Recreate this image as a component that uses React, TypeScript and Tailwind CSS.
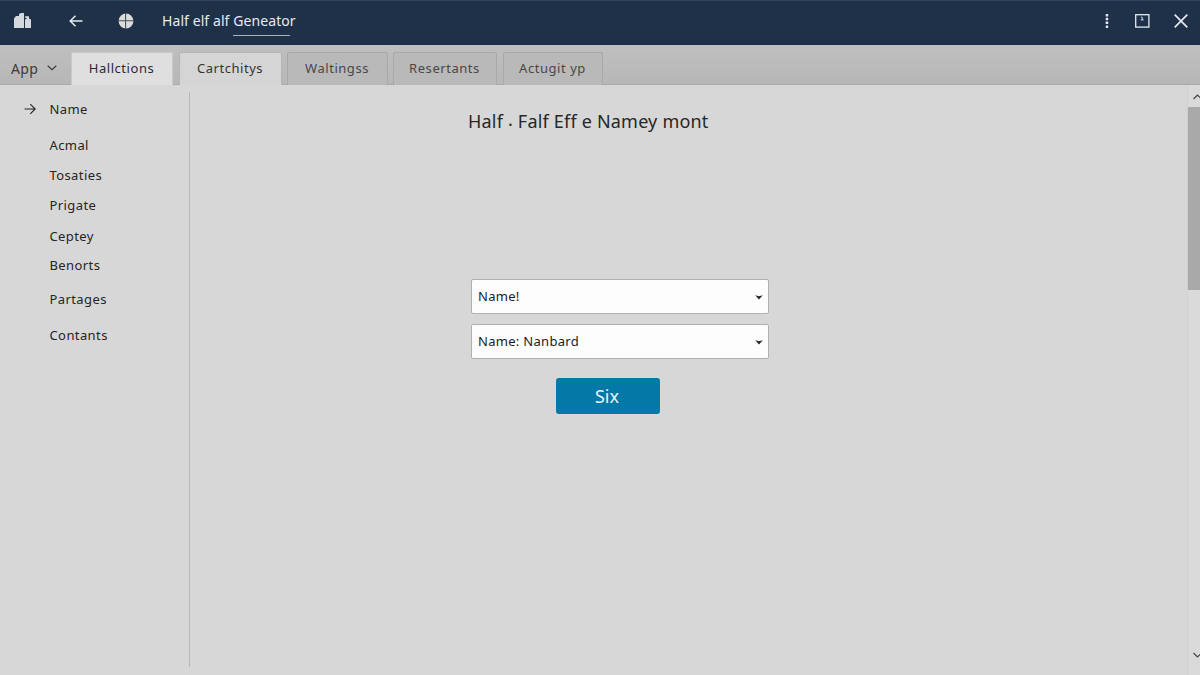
interface Tab {
  label: string;
  className: string;
}

interface NavItem {
  label: string;
  className: string;
}

const tabs: Tab[] = [
  { label: "Hallctions", className: "w-[102px] border-[#c9c9c9] bg-[#dfdfdf] text-[#2c2c2c]" },
  { label: "Cartchitys", className: "ml-[6px] w-[103px] border-[#b4b4b4] bg-[#d5d5d5] text-[#333333]" },
  { label: "Waltingss", className: "ml-[5px] w-[101px] border-[#a9a9a9] bg-[#b9b9b9] text-[#484848]" },
  { label: "Resertants", className: "ml-[5px] w-[104px] border-[#a9a9a9] bg-[#b9b9b9] text-[#484848]" },
  { label: "Actugit yp", className: "ml-[6px] w-[100px] border-[#a9a9a9] bg-[#b9b9b9] text-[#484848]" },
];

const navItems: NavItem[] = [
  { label: "Name", className: "" },
  { label: "Acmal", className: "mt-[8px]" },
  { label: "Tosaties", className: "mt-[2px]" },
  { label: "Prigate", className: "mt-[2px]" },
  { label: "Ceptey", className: "mt-[3px]" },
  { label: "Benorts", className: "mt-[1px]" },
  { label: "Partages", className: "mt-[6px]" },
  { label: "Contants", className: "mt-[8px]" },
];

function TitleBar() {
  return (
    <header className="flex h-[45px] shrink-0 items-center border-t border-[#34445a] bg-[#1f3049] pb-[4px] text-[#e6eaf0]">
      <svg viewBox="0 0 18 16" className="ml-[14px] h-4 w-[18px]" fill="#d5d8dc">
        <path d="M0 5.5L2 3h3V1l2-1h3v15H0z" />
        <path d="M11 4.5V3.2h4v2.2l2 1.2V15h-6V6.5l2-1z" />
      </svg>
      <svg viewBox="0 0 14 12" className="ml-[37px] h-3 w-[14px]" fill="none" stroke="currentColor" strokeWidth="1.5">
        <path d="M13.5 6H1.2M6.5 .8L1.2 6l5.3 5.2" />
      </svg>
      <svg viewBox="0 0 16 16" className="ml-[35px] h-4 w-4">
        <circle cx="8" cy="8" r="7.4" fill="#dcdcdb" />
        <path d="M7.6 0v16M0 7.7h16" stroke="#44505f" strokeWidth="1.1" />
      </svg>
      <h1 className="ml-[28px] whitespace-pre text-[14px] leading-[20px] tracking-[0.08px]">
        Half elf alf{" "}
        <span className="relative">
          Geneator
          <span className="absolute -bottom-[6px] left-0 h-px w-[57px] bg-[#a9b2be]" />
        </span>
      </h1>
      <div className="ml-auto flex items-center">
        <svg viewBox="0 0 4 14" className="h-[14px] w-1" fill="currentColor">
          <rect x=".7" y="0" width="2.5" height="2.5" rx=".6" />
          <rect x=".7" y="3.8" width="2.5" height="2.5" rx=".6" />
          <rect x=".7" y="7.6" width="2.5" height="2.5" rx=".6" />
          <rect x=".7" y="11.4" width="2.5" height="2.5" rx=".6" />
        </svg>
        <svg viewBox="0 0 15 14" className="ml-[26px] h-[14px] w-[15px]" fill="none" stroke="currentColor">
          <rect x=".7" y=".7" width="13.2" height="12.4" strokeWidth="1.3" />
          <path d="M6 3.2h1.2v2.7M5.7 5.9h3" strokeWidth=".9" />
        </svg>
        <svg viewBox="0 0 14 14" className="ml-[24px] mr-[12px] h-[14px] w-[14px]" fill="none" stroke="currentColor" strokeWidth="1.7">
          <path d="M.7 .7l12.6 12.6M13.3 .7L.7 13.3" />
        </svg>
      </div>
    </header>
  );
}

function TabBar() {
  return (
    <div className="flex h-10 shrink-0 items-end border-b border-[#aaaaaa] bg-linear-to-b from-[#bfbfbf] to-[#b7b7b7]">
      <button className="flex h-[32px] w-[71px] items-center pl-[11px] text-[14px] tracking-[0.3px] text-[#3c3c3c]">
        App
        <svg viewBox="0 0 10 6" className="ml-[9px] h-[6px] w-[10px]" fill="none" stroke="currentColor" strokeWidth="1.2">
          <path d="M.7 .8L5 4.8 9.3 .8" />
        </svg>
      </button>
      {tabs.map((tab) => (
        <button
          key={tab.label}
          className={`-mb-px flex h-[33px] items-center justify-center rounded-t-[2px] border border-b-0 pr-[1px] text-[13px] tracking-[0.55px] ${tab.className}`}
        >
          {tab.label}
        </button>
      ))}
    </div>
  );
}

function Sidebar() {
  return (
    <aside className="mt-[7px] mb-[8px] w-[190px] shrink-0 border-r border-[#b8b8b8]">
      <nav className="flex flex-col pt-[4px] text-[13px] tracking-[0.4px] text-[#252525]">
        {navItems.map((item, index) => (
          <a key={item.label} className={`flex h-7 items-center ${item.className}`}>
            <span className="flex w-[49.5px] pl-[24px]">
              {index === 0 && (
                <svg viewBox="0 0 12 12" className="-mt-[2px] h-3 w-3" fill="none" stroke="currentColor" strokeWidth="1.1">
                  <path d="M0.5 6h11M6.3 1.2L11.2 6l-4.9 4.8" />
                </svg>
              )}
            </span>
            {item.label}
          </a>
        ))}
      </nav>
    </aside>
  );
}

function SelectField({ value }: { value: string }) {
  return (
    <button className="flex h-[35px] w-[298px] items-center justify-between rounded-[2px] border border-[#b0b0b0] bg-[#fdfdfd] pt-[1px] pr-[5px] pl-[6px] text-[13px] tracking-[0.3px] text-[#1c1c1c]">
      {value}
      <svg viewBox="0 0 8 5" className="h-[5px] w-2" fill="#222222">
        <path d="M.3 .3L4 1.2 7.7 .3 4 4.6z" />
      </svg>
    </button>
  );
}

function ScrollBar() {
  return (
    <div className="flex w-[13px] shrink-0 flex-col overflow-hidden border-l border-[#d0d0d0] bg-[#dadada]">
      <svg viewBox="0 0 10 6" className="mt-[9px] ml-[5px] h-[6px] w-[10px] shrink-0" fill="none" stroke="#444444" strokeWidth="1.2">
        <path d="M.5 5L4.5 1l4 4" />
      </svg>
      <div className="mt-[7px] h-[183px] w-3 rounded-l-[1px] bg-[#a9a9a9]" />
      <svg viewBox="0 0 10 6" className="mt-auto mb-[17px] ml-[5px] h-[6px] w-[10px] shrink-0" fill="none" stroke="#444444" strokeWidth="1.2">
        <path d="M.5 1l4 4 4-4" />
      </svg>
    </div>
  );
}

export default function App() {
  return (
    <div className="flex h-[675px] w-[1200px] flex-col overflow-hidden bg-[#d7d7d7] font-['Noto_Sans',sans-serif]">
      <TitleBar />
      <TabBar />
      <div className="flex min-h-0 flex-1">
        <Sidebar />
        <main className="flex flex-1 flex-col items-start pl-[281px]">
          <h2 className="mt-[22px] -ml-[3px] text-[18px] leading-[28px] tracking-[0.2px] text-[#272727]">
            Half <span className="relative top-[3px]">·</span> Falf Eff e Namey mont
          </h2>
          <div className="mt-[144px] flex flex-col gap-[10px]">
            <SelectField value="Name!" />
            <SelectField value="Name: Nanbard" />
          </div>
          <button className="mt-[19px] ml-[85px] h-9 w-[104px] rounded-[3px] bg-[#0279a6] pr-[2px] text-[18px] text-[#e6f6fb]">
            Six
          </button>
        </main>
        <ScrollBar />
      </div>
    </div>
  );
}
